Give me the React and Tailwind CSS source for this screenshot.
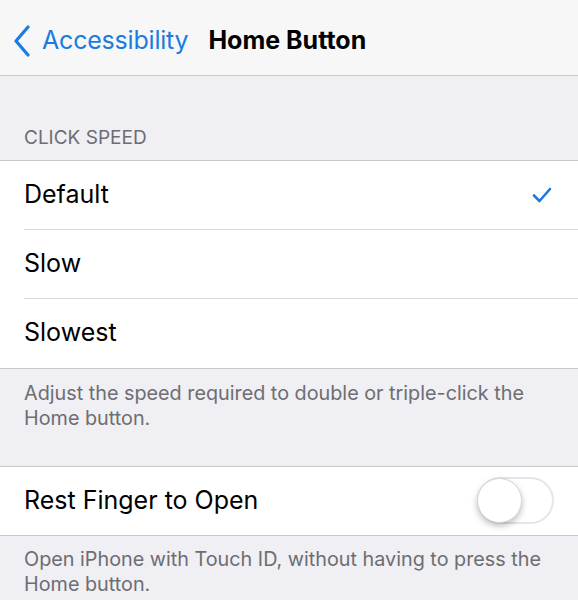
import React, { useState } from 'react';

const speeds = ['Default', 'Slow', 'Slowest'];

const Check = () => (
  <svg width="20" height="16" viewBox="0 0 20 16" fill="none">
    <path d="M2 8.5 L7.5 14 L18 2" stroke="#1a7ce0" strokeWidth="2.6" strokeLinecap="round" strokeLinejoin="round" />
  </svg>
);

const Toggle = ({ on, onChange }) => (
  <button
    onClick={onChange}
    className={`relative w-[77px] h-[47px] rounded-full border-2 ${on ? 'bg-[#4cd964] border-[#4cd964]' : 'bg-white border-[#e5e5ea]'}`}
  >
    <span
      className={`absolute top-[-1px] w-[45px] h-[45px] rounded-full bg-white border border-[#d6d6d6] shadow-[0_3px_6px_rgba(0,0,0,0.25)] ${on ? 'left-[29px]' : 'left-[-2px]'}`}
    />
  </button>
);

export default function App() {
  const [speed, setSpeed] = useState('Default');
  const [restFinger, setRestFinger] = useState(false);

  return (
    <div className="w-[578px] h-[600px] overflow-hidden bg-[#efeff4] font-['Inter','Liberation_Sans',sans-serif]">
      {/* Nav bar */}
      <div className="h-[76px] bg-[#f7f7f8] border-b border-[#c8c7cc] flex items-center pt-[6px]">
        <div className="flex items-center pl-[12px] text-[#1a7ce0]">
          <svg width="20" height="32" viewBox="0 0 20 32" fill="none">
            <path d="M16 2 L4 16 L16 30" stroke="#1a7ce0" strokeWidth="3.2" strokeLinecap="round" strokeLinejoin="round" />
          </svg>
          <span className="ml-[10px] text-[25px] tracking-[-0.2px]">Accessibility</span>
        </div>
        <span className="ml-[20px] text-[25px] font-bold text-black">Home Button</span>
      </div>

      {/* Click speed */}
      <div className="pt-[48px] pb-[7px] px-6 text-[19px] text-[#6d6d72] uppercase">Click Speed</div>
      <div className="bg-white border-y border-[#c8c7cc]">
        {speeds.map((s, i) => (
          <div key={s} className="pl-6" onClick={() => setSpeed(s)}>
            <div className={`h-[69px] flex items-center justify-between pr-[26px] ${i < speeds.length - 1 ? 'border-b border-[#d9d9de]' : ''}`}>
              <span className="text-[25px] text-black">{s}</span>
              {speed === s && <Check />}
            </div>
          </div>
        ))}
      </div>
      <p className="px-6 pt-[12px] text-[19.8px] leading-[25px] text-[#6d6d72]">
        Adjust the speed required to double or triple-click the Home button.
      </p>

      {/* Rest finger */}
      <div className="mt-[35px] bg-white border-y border-[#c8c7cc] h-[70px] flex items-center justify-between pl-6 pr-[24px]">
        <span className="text-[25px] text-black">Rest Finger to Open</span>
        <Toggle on={restFinger} onChange={() => setRestFinger(!restFinger)} />
      </div>
      <p className="px-6 pt-[11px] text-[19.8px] leading-[25px] text-[#6d6d72]">
        Open iPhone with Touch ID, without having to press the Home button.
      </p>
    </div>
  );
}
